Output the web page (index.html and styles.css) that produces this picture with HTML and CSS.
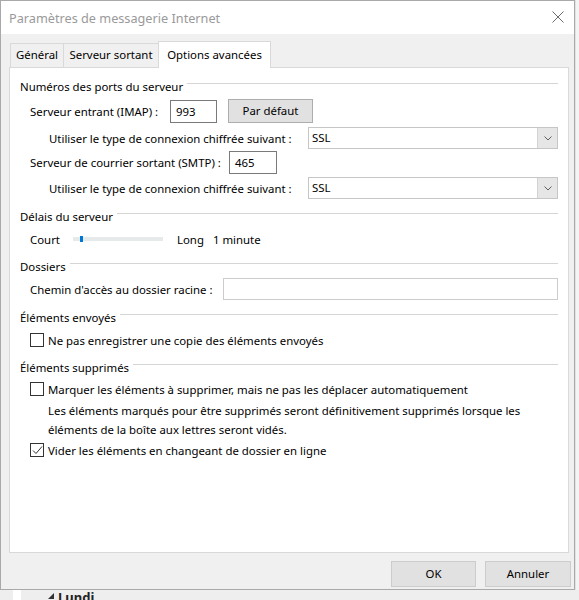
FILE: index.html
```html
<!DOCTYPE html>
<html lang="fr">
<head>
    <meta charset="UTF-8">
    <title>Paramètres de messagerie Internet</title>
    <link rel="stylesheet" href="styles.css">
</head>
<body>
<div class="screen">
    <div class="top">
        <div class="dialog">
            <div class="titlebar">
                <span class="title">Paramètres de messagerie Internet</span>
                <svg class="close" width="12" height="12" viewBox="0 0 12 12">
                    <path d="M0.5 0.5 L11.5 11.5 M11.5 0.5 L0.5 11.5" stroke="#6b6b6b" stroke-width="1" fill="none"/>
                </svg>
            </div>
            <div class="body">
                <div class="tabs">
                    <div class="tab tab-general">Général</div>
                    <div class="tab tab-out">Serveur sortant</div>
                    <div class="tab tab-adv active">Options avancées</div>
                </div>
                <div class="panel">
                    <!-- ports -->
                    <div class="group-title first"><span>Numéros des ports du serveur</span><i class="rule"></i></div>
                    <div class="row row-imap">
                        <span class="label lbl-imap">Serveur entrant (IMAP) :</span>
                        <div class="field port">993</div>
                        <div class="btn btn-default">Par défaut</div>
                    </div>
                    <div class="row row-select">
                        <span class="label lbl-enc">Utiliser le type de connexion chiffrée suivant :</span>
                        <div class="select"><span class="select-text">SSL</span><span class="arrow"><svg width="8" height="5" viewBox="0 0 8 5"><path d="M0.5 0.5 L4 4 L7.5 0.5" stroke="#606060" fill="none"/></svg></span></div>
                    </div>
                    <div class="row row-smtp">
                        <span class="label lbl-smtp">Serveur de courrier sortant (SMTP) :</span>
                        <div class="field port port-smtp">465</div>
                    </div>
                    <div class="row row-select">
                        <span class="label lbl-enc">Utiliser le type de connexion chiffrée suivant :</span>
                        <div class="select"><span class="select-text">SSL</span><span class="arrow"><svg width="8" height="5" viewBox="0 0 8 5"><path d="M0.5 0.5 L4 4 L7.5 0.5" stroke="#606060" fill="none"/></svg></span></div>
                    </div>

                    <!-- délais -->
                    <div class="group-title"><span>Délais du serveur</span><i class="rule"></i></div>
                    <div class="row row-slider">
                        <span class="label lbl-court">Court</span>
                        <div class="track"><b class="thumb"></b></div>
                        <span class="lbl-long">Long</span>
                        <span>1 minute</span>
                    </div>

                    <!-- dossiers -->
                    <div class="group-title"><span>Dossiers</span><i class="rule"></i></div>
                    <div class="row row-folder">
                        <span class="label lbl-root">Chemin d'accès au dossier racine :</span>
                        <div class="field root"></div>
                    </div>

                    <!-- envoyés -->
                    <div class="group-title"><span>Éléments envoyés</span><i class="rule"></i></div>
                    <div class="row check-row">
                        <span class="box"></span>
                        <span>Ne pas enregistrer une copie des éléments envoyés</span>
                    </div>

                    <!-- supprimés -->
                    <div class="group-title"><span>Éléments supprimés</span><i class="rule"></i></div>
                    <div class="row check-row row-mark">
                        <span class="box"></span>
                        <span>Marquer les éléments à supprimer, mais ne pas les déplacer automatiquement</span>
                    </div>
                    <p class="note">Les éléments marqués pour être supprimés seront définitivement supprimés lorsque les éléments de la boîte aux lettres seront vidés.</p>
                    <div class="row check-row row-purge">
                        <span class="box checked"><svg width="13" height="13" viewBox="0 0 13 13"><path d="M2 6.5 L5 9.5 L11 2.5" stroke="#333" stroke-width="1" fill="none"/></svg></span>
                        <span>Vider les éléments en changeant de dossier en ligne</span>
                    </div>
                </div>
                <div class="buttons">
                    <div class="btn btn-ok">OK</div>
                    <div class="btn btn-cancel">Annuler</div>
                </div>
            </div>
        </div>
        <div class="behind-right"></div>
    </div>
    <div class="behind-bottom">
        <span class="strip"></span>
        <svg class="tri" width="6" height="6" viewBox="0 0 6 6"><path d="M6 0 L6 6 L0 6 Z" fill="#333"/></svg>
        <span class="day">Lundi</span>
    </div>
</div>
</body>
</html>
```

FILE: styles.css
```css
*{
    margin: 0;
    padding: 0;
    box-sizing: border-box;
}
body{
    background: #eeeeee;
    font-family: "Noto Sans", "Open Sans", sans-serif;
    font-size: 11.4px;
    color: #000;
    overflow: hidden;
}
.screen{
    width: 579px;
    height: 600px;
    display: flex;
    flex-direction: column;
}
.top{
    display: flex;
    height: 590px;
}
.dialog{
    width: 575px;
    height: 590px;
    border: 1px solid #a9a9a9;
    background: #f0f0f0;
    display: flex;
    flex-direction: column;
    box-shadow: 0 1px 3px rgba(0,0,0,.25);
}
.behind-right{
    flex: 1;
    background: #f4f4f4;
    border-left: 1px solid #e2e2e2;
}
/* barre de titre */
.titlebar{
    height: 33px;
    background: #fff;
    display: flex;
    align-items: center;
    justify-content: space-between;
    padding: 0 10px 0 8px;
}
.title{
    font-size: 12.7px;
    color: #9a9a9a;
}
.close{
    margin-top: -2px;
}
.body{
    flex: 1;
    display: flex;
    flex-direction: column;
}
/* onglets */
.tabs{
    display: flex;
    align-items: flex-end;
    padding: 7px 0 0 9px;
}
.tab{
    height: 24px;
    line-height: 22px;
    border: 1px solid #d9d9d9;
    border-bottom: 0;
    background: #f0f0f0;
    text-align: center;
}
.tab-general{ width: 54px; }
.tab-out{ width: 96px; margin-left: -1px; }
.tab-adv{ width: 113px; margin-left: -1px; }
.tab.active{
    height: 27px;
    line-height: 26px;
    background: #fff;
    margin-bottom: -1px;
    position: relative;
    z-index: 1;
}
/* panneau */
.panel{
    height: 486px;
    margin: 0 5px 0 8px;
    background: #fff;
    border: 1px solid #d9d9d9;
    padding: 0 10px 0 0;
}
.group-title{
    height: 20px;
    display: flex;
    align-items: center;
    padding-left: 10px;
    margin-top: 7px;
    white-space: nowrap;
}
.group-title.first{ margin-top: 8px; }
.rule{
    flex: 1;
    border-top: 1px solid #d5d5d5;
    margin: 0 0 6px 4px;
}
.row{
    display: flex;
    align-items: center;
    padding-left: 20px;
    height: 20px;
    white-space: nowrap;
}
.row-imap{ height: 24px; margin-top: 3px; }
.row-select{ height: 22px; margin-top: 4px; }
.row-smtp{ height: 24px; margin-top: 1px; }
.row-smtp + .row-select{ margin-top: 3px; }
.row-slider{ margin-top: 3px; }
.row-folder{ height: 22px; margin-top: 2px; }
.label{ flex: none; }
.lbl-imap{ width: 140px; }
.lbl-enc{ width: 278px; padding-left: 19px; }
.lbl-smtp{ width: 199px; }
.lbl-court{ width: 43px; }
.lbl-root{ width: 193px; }
.field{
    height: 23px;
    line-height: 21px;
    border: 1px solid #7a7a7a;
    background: #fff;
    padding-left: 5px;
}
.port{ width: 47px; }
.port-smtp{ width: 48px; }
.root{
    flex: 1;
    height: 22px;
    border-color: #cccccc;
}
.btn{
    height: 24px;
    line-height: 22px;
    border: 1px solid #adadad;
    background: #e1e1e1;
    text-align: center;
}
.btn-default{
    width: 85px;
    margin-left: 11px;
}
.select{
    flex: 1;
    height: 22px;
    display: flex;
    border: 1px solid #c6c6c6;
    background: #fff;
}
.select-text{
    flex: 1;
    line-height: 20px;
    padding-left: 3px;
}
.arrow{
    width: 20px;
    background: #e6e6e6;
    border-left: 1px solid #d2d2d2;
    display: flex;
    align-items: center;
    justify-content: center;
}
/* curseur */
.track{
    width: 90px;
    height: 4px;
    background: #e7eaea;
    position: relative;
}
.thumb{
    position: absolute;
    left: 7px;
    top: -1px;
    width: 3px;
    height: 6px;
    background: #0078d7;
}
.lbl-long{
    margin: 0 9px 0 14px;
}
/* cases à cocher */
.check-row{
    margin-top: 3px;
}
.box{
    width: 14px;
    height: 14px;
    border: 1px solid #333;
    background: #fff;
    margin-right: 4px;
    flex: none;
}
.box svg{ display: block; margin: -0.5px 0 0 -0.5px; }
.row-mark{ margin-top: 2px; }
.note{
    padding-left: 38px;
    line-height: 19px;
    margin-top: 2px;
    padding-right: 16px;
}
.row-purge{ margin-top: 1px; }
/* boutons */
.buttons{
    display: flex;
    justify-content: flex-end;
    gap: 9px;
    padding: 8px 3px 0 0;
}
.btn-ok{
    width: 85px;
    height: 26px;
    line-height: 24px;
    border-color: #cccccc;
}
.btn-cancel{
    width: 86px;
    height: 26px;
    line-height: 24px;
    border-color: #cccccc;
}
/* fenêtre derrière */
.behind-bottom{
    height: 10px;
    display: flex;
    align-items: flex-start;
    background: #eeeeee;
}
.strip{
    width: 8px;
    height: 10px;
    background: #fff;
    margin-left: 13px;
}
.tri{
    margin: 3px 0 0 27px;
}
.day{
    font-weight: bold;
    font-size: 13px;
    line-height: 13px;
    margin: 1px 0 0 4px;
    color: #222;
}
```
